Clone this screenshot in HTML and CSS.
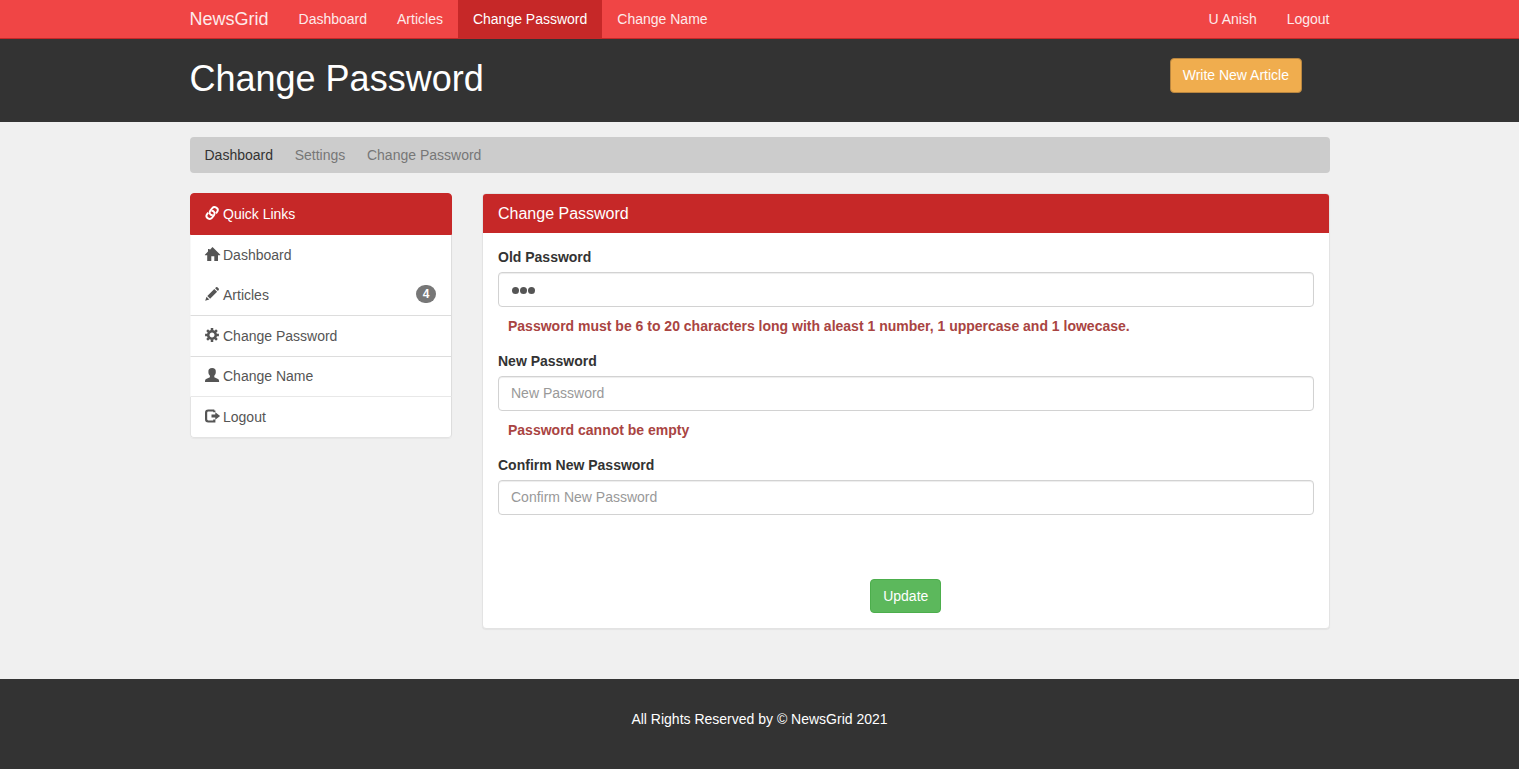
FILE: index.html
```html
<!DOCTYPE html>
<html lang="en">
<head>
<meta charset="utf-8">
<title>NewsGrid | Change Password</title>
<link rel="stylesheet" href="styles.css">
</head>
<body>
<nav class="navbar">
  <div class="container nav-row">
    <a class="brand">NewsGrid</a>
    <a class="nav-link">Dashboard</a>
    <a class="nav-link">Articles</a>
    <a class="nav-link active">Change Password</a>
    <a class="nav-link">Change Name</a>
    <span class="spacer"></span>
    <a class="nav-link">U Anish</a>
    <a class="nav-link last">Logout</a>
  </div>
</nav>
<header class="page-head">
  <div class="container head-row">
    <h1>Change Password</h1>
    <a class="btn btn-warning">Write New Article</a>
  </div>
</header>
<main class="container">
  <ol class="breadcrumb">
    <li class="current">Dashboard</li>
    <li>Settings</li>
    <li>Change Password</li>
  </ol>
  <div class="columns">
    <aside class="list">
      <a class="item item-head">
        <svg class="icon" viewBox="0 0 15 14"><g fill="none" stroke="currentColor" stroke-width="1.900"><path d="M7.800 9.300C4.600 9.200 3.900 6.500 5.300 4.700L7.300 2.200C9.400-.3 14 2.200 12.500 5.300L11 7.400"/><path d="M6.400 4.700C9.600 4.800 10.300 7.500 8.900 9.300L6.900 11.800C4.800 14.300.2 11.800 1.700 8.700L3.200 6.600"/></g></svg>Quick Links</a>
      <a class="item item-plain">
        <svg class="icon" viewBox="0 0 15 14"><path fill="currentColor" d="M7.500 0 15.300 7.700V8.200H13V14H9.300V9.300H6.300V14H2.200V8.200H-.1V7.700L3 4.600V2H4.700V2.900z"/></svg>Dashboard</a>
      <a class="item item-tall">
        <svg class="icon" viewBox="0 0 15 14"><path fill="currentColor" d="M.2 13.800 1.500 9.700 4.300 12.500zM2.300 8.900 9.300 1.900 12.100 4.700 5.100 11.700zM10.100 1.200 11 .3Q11.700-.3 12.400.3L13.700 1.600Q14.300 2.300 13.700 3L12.900 3.900z"/></svg>Articles<span class="badge">4</span></a>
      <a class="item item-tall">
        <svg class="icon" viewBox="0 0 15 14"><g transform="translate(7 7)"><circle r="3.800" fill="none" stroke="currentColor" stroke-width="2.600"/><path stroke="currentColor" stroke-width="2.500" d="M0-4.500V-6.900M0 4.500V6.900M-4.500 0H-6.900M4.500 0H6.900M-3.200-3.200-4.900-4.900M3.200 3.200 4.900 4.900M-3.200 3.200-4.900 4.900M3.200-3.200 4.900-4.900"/></g></svg>Change Password</a>
      <a class="item item-light">
        <svg class="icon" viewBox="0 0 15 14"><path fill="currentColor" d="M7.100 0C9.600 0 11 1.300 10.800 3.700 10.900 5.200 10.400 6.600 9.300 7.700V9.300L13 11Q14.100 11.600 14.100 13.300V14H0V13.300Q0 11.600 1.100 11L4.900 9.300V7.700C3.800 6.600 3.300 5.200 3.400 3.700 3.200 1.300 4.600 0 7.100 0z"/></svg>Change Name</a>
      <a class="item item-tall">
        <svg class="icon" viewBox="0 0 15 14"><path fill="none" stroke="currentColor" stroke-width="2.200" d="M9.300 1.500H3.300Q1.100 1.500 1.100 3.700V10.300Q1.100 12.500 3.300 12.500H9.300V10.500M9.300 1.500V3.200"/><path fill="currentColor" d="M6.500 5.600H10.300V3.200L15.100 7 10.300 10.800V8.400H6.500z"/></svg>Logout</a>
    </aside>
    <section class="panel">
      <h3>Change Password</h3>
      <form class="form">
        <label for="old">Old Password</label>
        <div class="control" id="old"><span class="dot"></span><span class="dot"></span><span class="dot"></span></div>
        <p class="error">Password must be 6 to 20 characters long with aleast 1 number, 1 uppercase and 1 lowecase.</p>
        <label for="new">New Password</label>
        <input class="control" id="new" type="password" placeholder="New Password">
        <p class="error">Password cannot be empty</p>
        <label for="confirm">Confirm New Password</label>
        <input class="control" id="confirm" type="password" placeholder="Confirm New Password">
        <button class="btn btn-success" type="button">Update</button>
      </form>
    </section>
  </div>
</main>
<footer class="footer">All Rights Reserved by © NewsGrid 2021</footer>
</body>
</html>
```
FILE: styles.css
```css
* { box-sizing: border-box; }
body {
  margin: 0;
  background: #f0f0f0;
  color: #333;
  font: 14px/20px "Liberation Sans", Arial, sans-serif;
}
.container { width: 1140px; margin: 0 auto; }
.navbar { height: 39px; background: #f04545; border-bottom: 1px solid #c62828; color: #fdeaea; }
.nav-row { display: flex; height: 39px; }
.brand { font-size: 18px; line-height: 38px; padding-right: 15px; }
.nav-link { padding: 9px 15px 10px; }
.nav-link.active { background: #c62828; color: #fff; }
.nav-link.last { padding-right: 0; }
.spacer { flex: 1; }
.page-head { height: 83px; background: #333; color: #fff; }
.head-row { display: flex; justify-content: space-between; align-items: flex-start; padding: 19px 27.500px 0 0; }
h1 { margin: 0; font-size: 36px; font-weight: 400; line-height: 41px; }
.btn {
  height: 34px;
  padding: 6px 12px;
  border: 1px solid;
  border-radius: 4px;
  color: #fff;
  font: inherit;
}
.btn-warning { height: 35px; background: #f0ad4e; border-color: #b98640; line-height: 21px; }
.btn-success { display: block; margin: 64px auto 0; background: #5cb85c; border-color: #4cae4c; }
.breadcrumb {
  display: flex;
  gap: 21.700px;
  height: 36px;
  margin: 15px 0 20px;
  padding: 8px 15px;
  border-radius: 4px;
  background: #ccc;
  color: #777;
  list-style: none;
}
.breadcrumb .current { color: #333; }
.columns { display: grid; grid-template-columns: 262.500px 847.500px; gap: 30px; align-items: start; height: 486px; }
.list {
  border-radius: 4px;
  background: #fff;
  box-shadow: 0 1px 1px rgba(0, 0, 0, .04);
  color: #555;
}
.item {
  display: flex;
  align-items: center;
  height: 40px;
  padding: 0 15px;
  border: solid #ddd;
  border-width: 0 1px 1px;
  border-left-color: #f8f8f8;
}
.item-plain { border-bottom: 0; }
.item-tall { height: 41px; }
.item-light { padding-bottom: 1px; border-bottom-color: #e8e8e8; }
.item:last-child { border-radius: 0 0 4px 4px; border-bottom-color: #e3e3e3; border-left-color: #e3e3e3; }
.item-head { height: 42px; background: #c62828; border: 1px solid #c62828; border-radius: 4px 4px 0 0; color: #fff; }
.icon { width: 15px; height: 14px; margin: 0 3px 2px -.5px; overflow: visible; }
.badge {
  margin-left: auto;
  margin-bottom: 2px;
  padding: 3px 6.500px;
  border-radius: 10px;
  background: #777;
  color: #fff;
  font-size: 12px;
  font-weight: 700;
  line-height: 12px;
}
.panel { height: 436px; border: 1px solid #e3e3e3; border-radius: 4px; background: #fff; box-shadow: 0 1px 1px rgba(0, 0, 0, .05); }
.panel h3 {
  height: 39px;
  margin: 0;
  padding: 10px 15px 9px;
  border-radius: 3px 3px 0 0;
  background: #c62828;
  color: #fff;
  font-size: 16px;
  font-weight: 400;
}
.form { padding: 14px 15px; }
.form label { display: block; margin-bottom: 5px; font-weight: 700; }
.control {
  display: flex;
  width: 100%;
  height: 35px;
  padding: 6px 12px 7px;
  border: 1px solid #d2d2d2;
  border-radius: 4px;
  background: #fff;
  box-shadow: inset 0 1px 1px rgba(0, 0, 0, .075);
  color: #555;
  font: inherit;
}
.control::placeholder { color: #999; opacity: 1; }
.dot { width: 7px; height: 7px; margin: 8px .7px 0; border-radius: 50%; background: #555; }
.error { margin: 9px 10px 15px; color: #a94442; font-weight: 700; }
.footer { height: 90px; padding: 30px; background: #333; color: #fff; text-align: center; }
```
